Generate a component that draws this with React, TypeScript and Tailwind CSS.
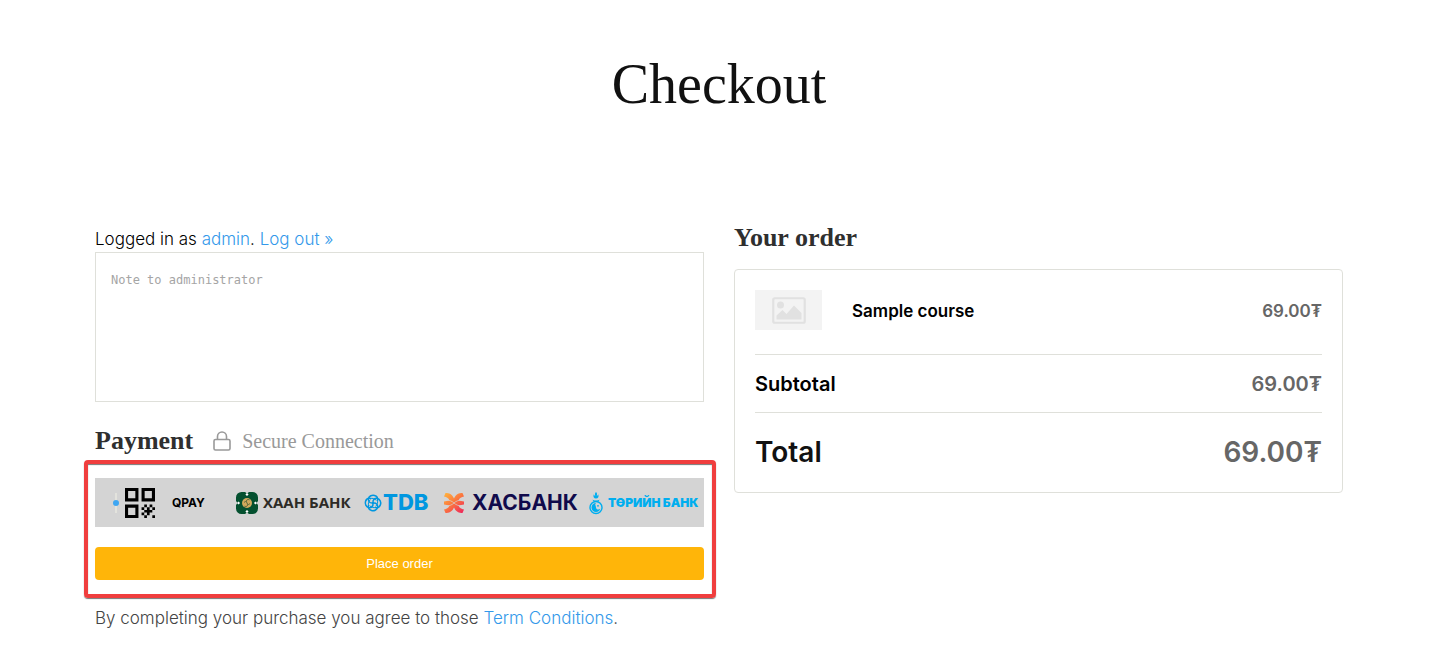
import { useState } from 'react'

const divider = 'border-b border-[#dfe0da]'

function LockIcon() {
  return (
    <svg width="18" height="20" viewBox="0 0 18 20" fill="none" stroke="#999999" strokeWidth="1.6" aria-hidden="true">
      <rect x="1" y="8.5" width="16" height="10.5" rx="1.5" />
      <path d="M4.5 8.5V5.5a4.5 4.5 0 0 1 9 0v3" />
    </svg>
  )
}

function ImagePlaceholder() {
  return (
    <div className="flex h-10 w-[67px] items-center justify-center bg-[#f3f3f3]">
      <svg width="34" height="27" viewBox="0 0 34 27" aria-hidden="true">
        <rect x="1.25" y="1.25" width="31.5" height="24.5" rx="1.5" fill="none" stroke="#e1e1e1" strokeWidth="2.2" />
        <circle cx="8.5" cy="8" r="3.5" fill="#e1e1e1" />
        <path d="M4.5 22.5v-4l6-5.5 4 4 7.5-8.5 7.5 7.5v6.5z" fill="#e1e1e1" />
      </svg>
    </div>
  )
}

function QrCode() {
  return (
    <svg className="shrink-0" width="30" height="30" viewBox="0 0 29 29" aria-hidden="true">
      <path d="M1.5 1.5h10v10h-10zM17.5 1.5h10v10h-10zM1.5 17.5h10v10h-10z" fill="none" stroke="#000" strokeWidth="3" />
      <path
        d="M18.6 16h2.6v2.6h-2.6zM23.8 16h2.6v2.6h-2.6zM16 18.6h2.6v2.6H16zM21.2 18.6h2.6v2.6h-2.6zM26.4 18.6H29v2.6h-2.6zM18.6 21.2h5.2v2.6h-5.2zM23.8 21.2h2.6v2.6h-2.6zM16 23.8h2.6v2.6H16zM21.2 23.8h2.6v2.6h-2.6zM18.6 26.4h2.6V29h-2.6zM26.4 26.4H29V29h-2.6z"
        fill="#000"
      />
    </svg>
  )
}

function KhanBank() {
  return (
    <span className="flex w-[117px] items-center gap-1">
      <svg className="shrink-0" width="24" height="24" viewBox="0 0 24 24" aria-hidden="true">
        <path
          d="M6.500 1h3.500l2 1.500 2-1.500h3.500A5.500 5.500 0 0 1 23 6.500V10l-1.500 2 1.500 2v3.500a5.500 5.500 0 0 1-5.500 5.500H14l-2-1.500-2 1.500H6.500A5.500 5.500 0 0 1 1 17.500V14l1.500-2L1 10V6.500A5.500 5.500 0 0 1 6.500 1z"
          fill="#04502f"
        />
        <path
          d="M12 2l1.600 1.600L12 5l-1.600-1.400zM12 22l1.600-1.600L12 19l-1.600 1.400zM2 12l1.600-1.600L5 12l-1.400 1.600zM22 12l-1.600-1.600L19 12l1.400 1.600z"
          fill="#fff"
        />
        <circle cx="12" cy="12" r="5" fill="#d0a95c" />
        <path d="M14.500 8.800c-2.500-1-4 1-2.500 3.200s0 4.200-2.500 3.200M9.500 11.500l1-1.500M13.500 14l1-1.500" fill="none" stroke="#4d6237" strokeWidth="1" />
      </svg>
      <span className="font-['Open_Sans',sans-serif] text-[15px] font-bold text-[#2d2b26]">ХААН БАНК</span>
    </span>
  )
}

function Tdb() {
  return (
    <span className="flex w-16 items-center gap-px">
      <svg className="shrink-0" width="18" height="18" viewBox="0 0 18 18" fill="none" stroke="#0097e0" strokeWidth="1.5" strokeLinecap="round" aria-hidden="true">
        <path d="M9 9C5.500 9.500 3.800 7 4.500 4.500S8 .8 10.500 1.500s3.500 2.500 3 5" />
        <path d="M9 9C8.500 5.500 11 3.800 13.500 4.500s3.700 3.500 3 6-2.500 3.500-5 3" />
        <path d="M9 9c3.500-.5 5.200 2 4.500 4.500s-3.500 3.700-6 3-3.500-2.500-3-5" />
        <path d="M9 9c.5 3.500-2 5.200-4.500 4.500s-3.700-3.500-3-6 2.500-3.500 5-3" />
        <path d="M6.500 4.500c2-.5 4 0 5.500 1.500M13.500 6.500c.5 2 0 4-1.500 5.500M11.500 13.500c-2 .5-4 0-5.500-1.500M4.500 11.500c-.5-2 0-4 1.500-5.500" strokeWidth="1" />
      </svg>
      <span className="font-['Inter',sans-serif] text-[22px] font-extrabold text-[#0097e0]">TDB</span>
    </span>
  )
}

function XacBank() {
  return (
    <span className="flex w-[132px] items-center gap-[7px]">
      <svg className="shrink-0" width="22" height="22" viewBox="0 0 22 22" aria-hidden="true">
        <defs>
          <linearGradient id="xac" gradientUnits="userSpaceOnUse" x1="2" y1="1" x2="19" y2="21">
            <stop offset="0" stopColor="#ffb33c" />
            <stop offset=".5" stopColor="#fb743f" />
            <stop offset="1" stopColor="#ee2a5b" />
          </linearGradient>
        </defs>
        <path
          d="M2.500 1c3.500 0 6.500 1 8.500 5.500C13 2 16 1 19.500 1L21 4.500c-2.500.3-4.500 1.500-5.500 4L21 9.500v3l-5.500 1c1 2.500 3 3.700 5.500 4L19.500 21c-3.500 0-6.500-1-8.500-5.500C9 20 6 21 2.500 21L1 17.500c2.500-.3 4.500-1.500 5.500-4L1 12.500v-3l5.500-1C5.500 6 3.500 4.800 1 4.500z"
          fill="url(#xac)"
        />
        <path d="M2 7.500c4 .5 7 1.500 9 3.500 2-2 5-3 9-3.500M2 14.500c4-.5 7-1.500 9-3.500 2 2 5 3 9 3.500" fill="none" stroke="#d4d4d4" strokeWidth=".7" />
      </svg>
      <span className="font-['Inter',sans-serif] text-[21px] font-bold text-[#100a4b]">ХАСБАНК</span>
    </span>
  )
}

function StateBank() {
  return (
    <span className="flex w-[107px] items-center gap-[5px]">
      <svg className="shrink-0" width="14" height="24" viewBox="0 0 14 24" fill="#00aeef" aria-hidden="true">
        <path d="M7 1c1.500 1.500 1 2.500.8 4 .8-.3 1.200-.9 1.400-1.700 1 2.400 0 4.200-2.200 4.200S3.800 5.700 4.800 3.300C5 4.100 5.400 4.700 6.200 5 6 3.500 5.500 2.500 7 1z" />
        <path d="M3.500 8.500c1.500 1.300 5.500 1.300 7 0-.5 1.800-2 2.500-3.500 2.500s-3-.7-3.500-2.500z" />
        <circle cx="7" cy="16.500" r="6" fill="none" stroke="#00aeef" strokeWidth="1.4" />
        <path d="M7 12a4.500 4.500 0 0 0 0 9 4.500 4.500 0 0 0 4.300-3.500c-1 1.500-4 1.500-4.300-1s-1.500-2.500 0-4.500z" />
        <circle cx="9" cy="14.800" r=".9" />
      </svg>
      <span className="font-['Inter',sans-serif] text-xs font-black text-[#00aeef]">ТӨРИЙН БАНК</span>
    </span>
  )
}

function PaymentMethod() {
  return (
    <label className="flex h-[49px] items-center overflow-hidden bg-[#d4d4d4] pl-5 whitespace-nowrap">
      <span className="flex h-5 w-0.5 items-center justify-center bg-[#e3e3dd]">
        <input
          type="radio"
          name="payment"
          defaultChecked
          className="size-1.5 shrink-0 appearance-none rounded-full bg-[#3ea6f2]"
        />
      </span>
      <span className="ml-2"><QrCode /></span>
      <span className="ml-[17px] w-[63px] font-['Inter',sans-serif] text-xs font-bold text-black">QPAY</span>
      <span className="flex items-center">
        <KhanBank />
        <span className="ml-3"><Tdb /></span>
        <span className="ml-[15px]"><XacBank /></span>
        <span className="ml-3.5"><StateBank /></span>
      </span>
    </label>
  )
}

function OrderSummary() {
  return (
    <section>
      <h2 className="font-['Liberation_Serif',serif] text-[26px] leading-8 font-bold text-[#2f2f2f]">Your order</h2>
      <div className="mt-[15px] rounded border border-[#dfe0da] px-5 pt-5">
        <table className="w-full font-semibold">
          <tbody>
            <tr className={divider}>
              <td className="w-[97px] pb-6"><ImagePlaceholder /></td>
              <th scope="row" className="pt-1 pb-6 text-left text-[17px] font-semibold text-black">Sample course</th>
              <td className="pt-1 pb-6 text-right text-[17px] text-[#666666]">69.00₮</td>
            </tr>
            <tr className={`h-[58px] ${divider}`}>
              <th scope="row" colSpan={2} className="text-left text-xl font-semibold text-black">Subtotal</th>
              <td className="text-right text-xl text-[#666666]">69.00₮</td>
            </tr>
            <tr className="h-[79px]">
              <th scope="row" colSpan={2} className="text-left text-[28px] font-semibold text-[#111111]">Total</th>
              <td className="text-right text-[28px] text-[#666666]">69.00₮</td>
            </tr>
          </tbody>
        </table>
      </div>
    </section>
  )
}

export default function App() {
  const [note, setNote] = useState('')

  return (
    <div className="bg-white pr-[11px] font-['Inter',sans-serif] text-[17px] text-black">
      <main className="mx-auto max-w-[1248px] pt-[52px] pb-5">
        <h1 className="text-center font-['Liberation_Serif',serif] text-[56px] leading-16 text-[#111111]">Checkout</h1>

        <div className="mt-[106px] grid grid-cols-2 gap-[30px]">
          <form className="pt-1.5" onSubmit={e => e.preventDefault()}>
            <p className="mb-0.5 leading-[22px] font-light">
              Logged in as <a href="#admin" className="text-[#3399ea]">admin</a>. <a href="#logout" className="text-[#3399ea]">Log out »</a>
            </p>
            <textarea
              aria-label="Note to administrator"
              placeholder="Note to administrator"
              value={note}
              onChange={e => setNote(e.target.value)}
              className="block h-[150px] w-full resize-none border border-[#dfe0da] px-[15px] py-4 font-['DejaVu_Sans_Mono',monospace] text-xs leading-[22px] outline-none placeholder:text-[#a5a5a5]"
            />

            <div className="mt-[22px] mb-0.5 flex h-[34px] items-center">
              <h2 className="font-['Liberation_Serif',serif] text-[26px] leading-8 font-bold text-[#2f2f2f]">Payment</h2>
              <span className="ml-5 flex items-center gap-[11px] font-['Liberation_Serif',serif] text-xl text-[#999999]">
                <LockIcon />
                Secure Connection
              </span>
            </div>

            <div className="-mr-3 -ml-[11px] rounded border-4 border-[#f03e3e] py-3.5 pr-2 pl-[7px] shadow-[0_1px_1px_#777777,inset_0_1px_1px_#777777]">
              <PaymentMethod />
              <button
                type="submit"
                className="mt-5 h-[33px] w-full rounded bg-[#ffb509] font-['Liberation_Sans',sans-serif] text-[13px] text-white"
              >
                Place order
              </button>
            </div>

            <p className="mt-2 leading-6 font-light text-[#444444]">
              By completing your purchase you agree to those <a href="#terms" className="text-[#3399ea]">Term Conditions</a>.
            </p>
          </form>

          <OrderSummary />
        </div>
      </main>
    </div>
  )
}
